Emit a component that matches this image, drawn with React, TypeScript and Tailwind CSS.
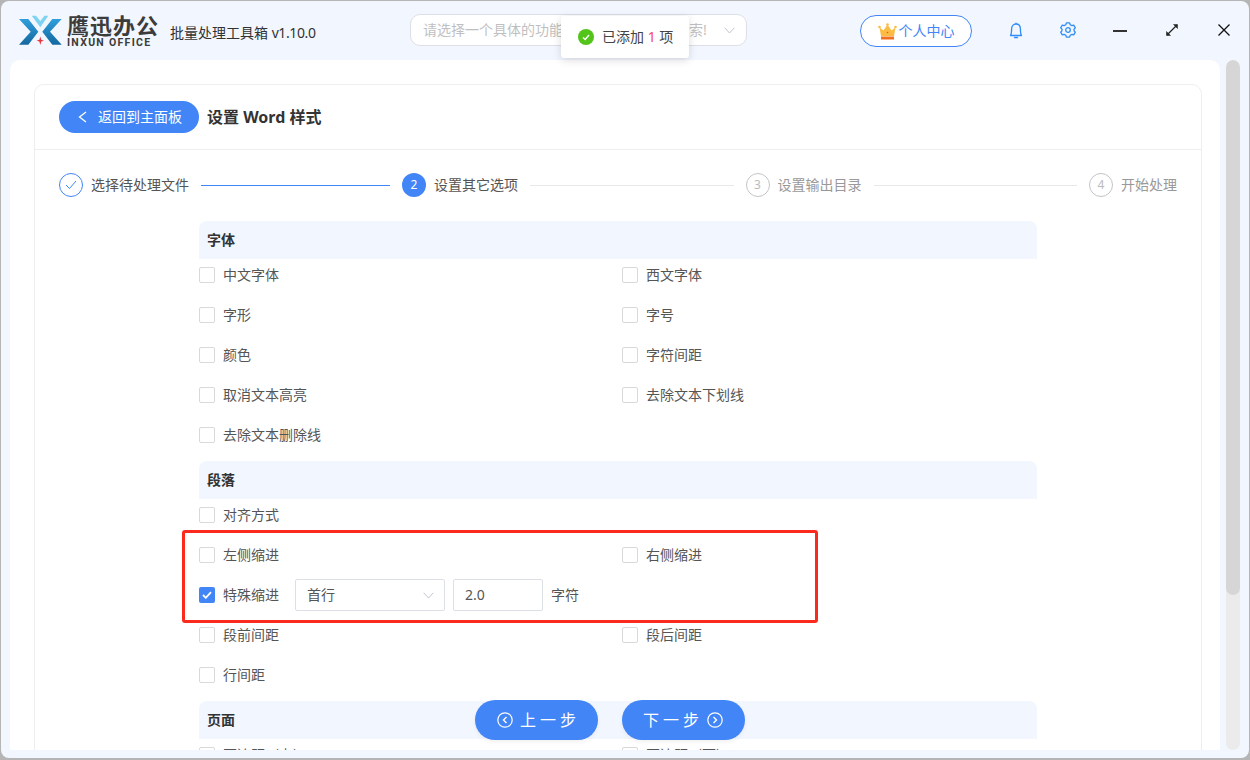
import React from "react";

const FONT = "font-['Microsoft_YaHei','Noto_Sans','Noto_Sans_CJK_SC',sans-serif]";

function Logo() {
  return (
    <svg width="44" height="32" viewBox="0 0 44 32" className="shrink-0">
      <defs>
        <linearGradient id="armL" x1="0" y1="0" x2="0" y2="1">
          <stop offset="0" stopColor="#2f9fdc" />
          <stop offset="1" stopColor="#14689f" />
        </linearGradient>
      </defs>
      <path d="M1 4 L10.3 4 L20.3 16.7 L10.3 29.7 L1 29.7 L12.7 16.7 Z" fill="url(#armL)" />
      <path d="M43.7 4 L34.3 4 L24.3 16.7 L34.3 29.7 L43.7 29.7 L32 16.7 Z" fill="url(#armL)" />
      <path d="M13.7 0.7 L18 0.7 L22.3 6 L26.5 0.7 L30.3 0.7 L22.3 12.3 Z" fill="#7fd3f2" />
      <path d="M22.3 21.5 L23.2 24.8 L26 25.7 L23.2 26.6 L22.3 30 L21.4 26.6 L18.6 25.7 L21.4 24.8 Z" fill="#e8323c" />
    </svg>
  );
}

function Crown() {
  return (
    <svg width="19" height="17" viewBox="0 0 19 17" className="shrink-0">
      <path d="M1.5 4.5 L5.5 7.5 L9.5 1.5 L13.5 7.5 L17.5 4.5 L16 13 L3 13 Z" fill="#fcbc42" />
      <rect x="3" y="13.5" width="13" height="3" fill="#f2701d" />
      <circle cx="1.5" cy="4" r="1.3" fill="#fcbc42" />
      <circle cx="17.5" cy="4" r="1.3" fill="#fcbc42" />
      <circle cx="9.5" cy="1.5" r="1.3" fill="#fcbc42" />
      <circle cx="9.5" cy="9.5" r="0.8" fill="#e8523c" />
    </svg>
  );
}

function Bell() {
  return (
    <svg width="14" height="17" viewBox="0 0 14 17" fill="none" stroke="#2f8df5" strokeWidth="1.3" className="shrink-0">
      <path d="M1.5 13.5 C2.5 12 2.6 10.5 2.6 7 C2.6 4 4.5 2 7 2 C9.5 2 11.4 4 11.4 7 C11.4 10.5 11.5 12 12.5 13.5 Z" strokeLinejoin="round" />
      <path d="M5.5 15.5 H8.5" strokeLinecap="round" />
      <path d="M7 0.8 V2" />
    </svg>
  );
}

function Gear() {
  return (
    <svg width="16" height="16" viewBox="0 0 16 16" fill="none" stroke="#2f8df5" strokeWidth="1.3" className="shrink-0" strokeLinejoin="round">
      <path d="M6.4 0.9 H9.6 L10.2 2.7 L11.9 3.6 L13.7 3.1 L15.3 5.9 L14 7.2 V8.8 L15.3 10.1 L13.7 12.9 L11.9 12.4 L10.2 13.3 L9.6 15.1 H6.4 L5.8 13.3 L4.1 12.4 L2.3 12.9 L0.7 10.1 L2 8.8 V7.2 L0.7 5.9 L2.3 3.1 L4.1 3.6 L5.8 2.7 Z" />
      <circle cx="8" cy="8" r="2.3" />
    </svg>
  );
}

function Chevron({ className, color }: { className?: string; color: string }) {
  return (
    <svg width="11" height="7" viewBox="0 0 11 7" fill="none" stroke={color} strokeWidth="1" className={className}>
      <path d="M0.7 0.8 L5.5 6 L10.3 0.8" />
    </svg>
  );
}

function CircleArrow({ dir }: { dir: "l" | "r" }) {
  return (
    <svg width="16" height="16" viewBox="0 0 16 16" fill="none" stroke="#fff" strokeWidth="1.2" className="shrink-0">
      <circle cx="8" cy="8" r="7.2" />
      <path d={dir === "l" ? "M9.5 5 L6.5 8 L9.5 11" : "M6.5 5 L9.5 8 L6.5 11"} strokeWidth="1.4" />
    </svg>
  );
}

function Check({ label, checked }: { label: string; checked?: boolean }) {
  return (
    <label className="flex items-center gap-2 h-8 text-sm text-[#555]">
      <span
        className={
          checked
            ? "w-4 h-4 rounded-[2px] bg-[#4285f6] flex items-center justify-center shrink-0"
            : "w-4 h-4 rounded-[2px] bg-white border border-[#d9d9d9] shrink-0"
        }
      >
        {checked && (
          <svg width="10" height="8" viewBox="0 0 10 8" fill="none" stroke="#fff" strokeWidth="1.8">
            <path d="M1 4 L3.8 6.8 L9 1.2" />
          </svg>
        )}
      </span>
      <span>{label}</span>
    </label>
  );
}

function Section({ title, children }: { title: string; children: React.ReactNode }) {
  return (
    <section className="w-[838px] mb-[10px]">
      <h3 className="h-[38px] bg-[#f2f6fe] rounded-t-[8px] pl-2 flex items-center text-sm font-bold text-[#333]">
        {title}
      </h3>
      <div className="grid grid-cols-[423px_1fr] gap-y-2">{children}</div>
    </section>
  );
}

function Step({ n, label, state }: { n: number; label: string; state: "done" | "active" | "todo" }) {
  return (
    <div className="flex items-center gap-2 shrink-0">
      {state === "done" && (
        <span className="w-6 h-6 rounded-full border border-[#4285f6] flex items-center justify-center">
          <svg width="12" height="10" viewBox="0 0 12 10" fill="none" stroke="#4285f6" strokeWidth="1">
            <path d="M1 5 L4.5 8.5 L11 1" />
          </svg>
        </span>
      )}
      {state === "active" && (
        <span className="w-6 h-6 rounded-full bg-[#4285f6] text-white text-xs flex items-center justify-center">{n}</span>
      )}
      {state === "todo" && (
        <span className="w-6 h-6 rounded-full border border-[#c4c4c4] text-[#bbb] text-xs flex items-center justify-center">{n}</span>
      )}
      <span className={state === "todo" ? "text-sm text-[#999]" : "text-sm text-[#555]"}>{label}</span>
    </div>
  );
}

export default function App() {
  return (
    <div className={`${FONT} w-[1250px] h-[760px] bg-[#b5b5b5] overflow-hidden relative`}>
      <div className="absolute inset-x-px top-px bottom-[2px] rounded-[8px] bg-[#f2f6fe] flex flex-col overflow-hidden">
        {/* top bar */}
        <header className="h-[59px] shrink-0 flex items-center relative">
          <div className="ml-[17px] flex items-center">
            <Logo />
            <div className="ml-[5px] flex flex-col items-start">
              <span className="text-[22px] leading-[24px] font-bold tracking-[1px] text-[#3c3c3c]">鹰迅办公</span>
              <span className="text-[10.5px] leading-[11px] font-bold tracking-[1.3px] text-[#3c3c3c] font-['Roboto']">INXUN OFFICE</span>
            </div>
            <span className="ml-[11px] mt-[4px] text-sm text-[#333]">
              批量处理工具箱 <span className="tracking-[-0.4px]">v1.10.0</span>
            </span>
          </div>
          <div className="absolute left-[409px] top-[13px] w-[337px] h-8 rounded-[10px] border border-[#dcdfe6] bg-white flex items-center justify-between pl-3 pr-[11px]">
            <span className="text-sm text-[#bfbfbf]">请选择一个具体的功能，或者在此处输入搜索!</span>
            <Chevron color="#c0c4cc" />
          </div>
          <div className="absolute left-[859px] top-[14px] w-[112px] h-8 rounded-full border border-[#4285f6] bg-white flex items-center justify-center gap-[2px] text-sm text-[#4285f6]">
            <Crown />
            <span>个人中心</span>
          </div>
          <div className="absolute left-[1008px] top-[21px]"><Bell /></div>
          <div className="absolute left-[1059px] top-[21px]"><Gear /></div>
          <div className="absolute left-[1112px] top-[29px] w-[14px] h-[1.5px] bg-[#333]" />
          <svg className="absolute left-[1164px] top-[22px]" width="14" height="14" viewBox="0 0 14 14" fill="none" stroke="#222" strokeWidth="1.3">
            <path d="M2 12 L12 2" />
            <path d="M8.5 1.5 H12.5 V5.5 Z" fill="#222" strokeWidth="0.5" />
            <path d="M1.5 8.5 V12.5 H5.5 Z" fill="#222" strokeWidth="0.5" />
          </svg>
          <svg className="absolute left-[1216px] top-[22px]" width="14" height="14" viewBox="0 0 14 14" fill="none" stroke="#111" strokeWidth="1.3">
            <path d="M1.5 1.5 L12.5 12.5 M12.5 1.5 L1.5 12.5" />
          </svg>
        </header>

        {/* body */}
        <div className="h-[690px] shrink-0 flex">
          <main className="ml-[9px] w-[1210px] h-full bg-white rounded-t-[10px] pt-6 pl-6 overflow-hidden">
            <div className="w-[1168px] h-[680px] border border-[#eeeeee] rounded-t-[10px]">
              <div className="h-[65px] flex items-center pl-6 border-b border-[#eeeeee]">
                <button className="w-[140px] h-8 rounded-full bg-[#4285f6] text-white text-sm flex items-center pl-[19px] gap-[11px]">
                  <svg width="9" height="12" viewBox="0 0 9 12" fill="none" stroke="#fff" strokeWidth="1.3">
                    <path d="M8 1 L1.5 6 L8 11" />
                  </svg>
                  返回到主面板
                </button>
                <span className="ml-2 text-base font-bold text-[#333]">设置 Word 样式</span>
              </div>
              <div className="h-[71px] flex items-center px-6 pb-px">
                <Step n={1} label="选择待处理文件" state="done" />
                <div className="w-[189px] h-px bg-[#4285f6] mx-3" />
                <Step n={2} label="设置其它选项" state="active" />
                <div className="flex-1 h-px bg-[#e8e8e8] mx-3" />
                <Step n={3} label="设置输出目录" state="todo" />
                <div className="flex-1 h-px bg-[#e8e8e8] mx-3" />
                <Step n={4} label="开始处理" state="todo" />
              </div>
              <div className="pl-[164px]">
                <Section title="字体">
                  <Check label="中文字体" />
                  <Check label="西文字体" />
                  <Check label="字形" />
                  <Check label="字号" />
                  <Check label="颜色" />
                  <Check label="字符间距" />
                  <Check label="取消文本高亮" />
                  <Check label="去除文本下划线" />
                  <Check label="去除文本删除线" />
                </Section>
                <Section title="段落">
                  <div className="col-span-2"><Check label="对齐方式" /></div>
                  <Check label="左侧缩进" />
                  <Check label="右侧缩进" />
                  <div className="col-span-2 flex items-center text-sm text-[#555]">
                    <Check label="特殊缩进" checked />
                    <div className="ml-4 w-[150px] h-8 border border-[#dcdfe6] rounded-[2px] flex items-center justify-between pl-[11px] pr-[10px] text-[#555]">
                      首行
                      <Chevron color="#c0c4cc" />
                    </div>
                    <div className="ml-2 w-[90px] h-8 border border-[#dcdfe6] rounded-[2px] flex items-center pl-[11px] text-[#555]">2.0</div>
                    <span className="ml-2">字符</span>
                  </div>
                  <Check label="段前间距" />
                  <Check label="段后间距" />
                  <Check label="行间距" />
                </Section>
                <Section title="页面">
                  <Check label="页边距（上）" />
                  <Check label="页边距（下）" />
                </Section>
              </div>
            </div>
          </main>
          <div className="ml-[6px] w-[14px] h-full rounded-full bg-[#ebebeb] overflow-hidden">
            <div className="w-full h-[535px] rounded-full bg-[#d6d6d6]" />
          </div>
        </div>
      </div>

      {/* toast */}
      <div className="absolute left-[561px] top-4 w-[128px] h-[42px] bg-white rounded-[3px] shadow-[0_2px_8px_rgba(0,0,0,0.15)] flex items-center pl-[17px] gap-2 text-sm text-[#444]">
        <span className="w-4 h-4 rounded-full bg-[#52c41a] flex items-center justify-center shrink-0">
          <svg width="8" height="7" viewBox="0 0 8 7" fill="none" stroke="#fff" strokeWidth="1.4">
            <path d="M1 3.5 L3.2 5.5 L7 1" />
          </svg>
        </span>
        <span>已添加 <span className="text-[#f5475b]">1</span> 项</span>
      </div>

      {/* red annotation */}
      <div className="absolute left-[182px] top-[530px] w-[636px] h-[93px] border-[3px] border-[#fb2a1e] rounded-[3px]" />

      {/* floating nav */}
      <button className="absolute left-[475px] top-[700px] w-[123px] h-10 rounded-full bg-[#4285f6] text-white text-base tracking-[4px] flex items-center pl-[22px] gap-[7px] shadow-[0_2px_4px_rgba(0,0,0,0.06)]">
        <CircleArrow dir="l" />
        上一步
      </button>
      <button className="absolute left-[622px] top-[700px] w-[123px] h-10 rounded-full bg-[#4285f6] text-white text-base tracking-[4px] flex items-center pl-[21px] gap-1 shadow-[0_2px_4px_rgba(0,0,0,0.06)]">
        下一步
        <CircleArrow dir="r" />
      </button>
    </div>
  );
}
